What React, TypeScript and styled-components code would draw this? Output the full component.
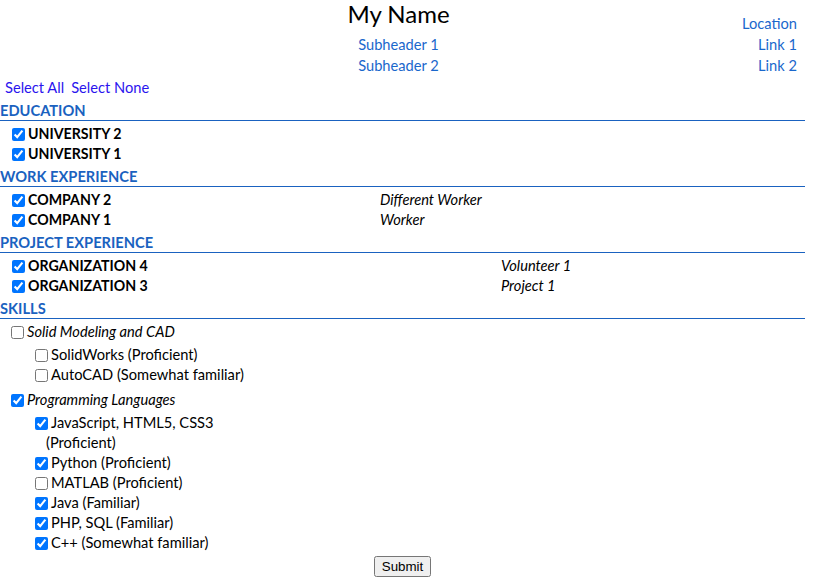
import React, { FC } from 'react';
import styled, { createGlobalStyle } from 'styled-components';

const GlobalStyle = createGlobalStyle`
  body {
    margin: 0;
    background: #fff;
    color: #000;
    font-family: Lato, "Open Sans", sans-serif;
    font-size: 14.67px;
  }
`;

const Page = styled.div`
  width: 805px;
`;

const Header = styled.div`
  display: grid;
  grid-template-columns: 1fr auto 1fr;
  grid-template-rows: 34px 21px 21px;
  padding-right: 8px;
`;

const Name = styled.div`
  grid-column: 2;
  grid-row: 1;
  justify-self: center;
  align-self: start;
  font-size: 24px;
  line-height: 27px;
`;

const SubLink = styled.a<{ $col: number; $row: number }>`
  grid-column: ${(p) => p.$col};
  grid-row: ${(p) => p.$row};
  justify-self: ${(p) => (p.$col === 3 ? 'end' : 'center')};
  align-self: ${(p) => (p.$row === 1 ? 'end' : 'center')};
  line-height: 21px;
  color: #1a67cc;
  text-decoration: none;
`;

const SelectBar = styled.div`
  display: flex;
  gap: 7px;
  margin-top: 1px;
  padding-left: 5px;
  line-height: 21px;
`;

const SelectLink = styled.a`
  color: #2a14ee;
  text-decoration: none;
  cursor: pointer;
`;

const SectionTitle = styled.div`
  padding-top: 4px;
  line-height: 18px;
  font-weight: bold;
  color: #1a62c0;
  border-bottom: 1px solid #1a62c0;
  margin-bottom: 3px;
`;

const Row = styled.div<{ $split: number }>`
  display: grid;
  grid-template-columns: ${(p) => p.$split}px 1fr;
  padding-left: 8px;
  line-height: 20px;
`;

const Check = styled.input.attrs({ type: 'checkbox' })`
  width: 13px;
  height: 13px;
  margin: 0 3px 0 4px;
  vertical-align: -2px;
`;

const Entry = styled.label`
  font-weight: bold;
  font-size: 14.2px;
`;

const Role = styled.span`
  font-style: italic;
`;

const SkillGroup = styled.div`
  padding-left: 7px;
  line-height: 20px;

  & + & {
    margin-top: 5px;
  }
`;

const GroupLabel = styled.label`
  font-style: italic;
`;

const SkillList = styled.div<{ $width: number }>`
  margin-top: 3px;
  width: ${(p) => p.$width}px;
`;

const SkillItem = styled.label`
  display: block;
  padding-left: 39px;
  text-indent: -15px;
  line-height: 20px;
`;

const Footer = styled.div`
  display: flex;
  justify-content: center;
  padding: 3px 0 8px;
`;

const SubmitButton = styled.button`
  font-family: "Liberation Sans", Arial, sans-serif;
  font-size: 13.33px;
`;

interface Item {
  name: string;
  role?: string;
}

const sections: { title: string; split: number; items: Item[] }[] = [
  { title: 'EDUCATION', split: 372, items: [{ name: 'UNIVERSITY 2' }, { name: 'UNIVERSITY 1' }] },
  {
    title: 'WORK EXPERIENCE',
    split: 372,
    items: [
      { name: 'COMPANY 2', role: 'Different Worker' },
      { name: 'COMPANY 1', role: 'Worker' },
    ],
  },
  {
    title: 'PROJECT EXPERIENCE',
    split: 493,
    items: [
      { name: 'ORGANIZATION 4', role: 'Volunteer 1' },
      { name: 'ORGANIZATION 3', role: 'Project 1' },
    ],
  },
];

const skills = [
  {
    group: 'Solid Modeling and CAD',
    checked: false,
    width: 280,
    items: [
      { name: 'SolidWorks (Proficient)', checked: false },
      { name: 'AutoCAD (Somewhat familiar)', checked: false },
    ],
  },
  {
    group: 'Programming Languages',
    checked: true,
    width: 222,
    items: [
      { name: 'JavaScript, HTML5, CSS3 (Proficient)', checked: true },
      { name: 'Python (Proficient)', checked: true },
      { name: 'MATLAB (Proficient)', checked: false },
      { name: 'Java (Familiar)', checked: true },
      { name: 'PHP, SQL (Familiar)', checked: true },
      { name: 'C++ (Somewhat familiar)', checked: true },
    ],
  },
];

const App: FC = () => (
  <Page>
    <GlobalStyle />
    <Header>
      <Name>My Name</Name>
      <SubLink $col={3} $row={1}>Location</SubLink>
      <SubLink $col={2} $row={2}>Subheader 1</SubLink>
      <SubLink $col={3} $row={2}>Link 1</SubLink>
      <SubLink $col={2} $row={3}>Subheader 2</SubLink>
      <SubLink $col={3} $row={3}>Link 2</SubLink>
    </Header>
    <SelectBar>
      <SelectLink>Select All</SelectLink>
      <SelectLink>Select None</SelectLink>
    </SelectBar>
    {sections.map((section) => (
      <div key={section.title}>
        <SectionTitle>{section.title}</SectionTitle>
        {section.items.map((item) => (
          <Row key={item.name} $split={section.split}>
            <Entry>
              <Check defaultChecked />
              {item.name}
            </Entry>
            {item.role && <Role>{item.role}</Role>}
          </Row>
        ))}
      </div>
    ))}
    <SectionTitle>SKILLS</SectionTitle>
    {skills.map((skill) => (
      <SkillGroup key={skill.group}>
        <GroupLabel>
          <Check defaultChecked={skill.checked} />
          {skill.group}
        </GroupLabel>
        <SkillList $width={skill.width}>
          {skill.items.map((item) => (
            <SkillItem key={item.name}>
              <Check defaultChecked={item.checked} />
              {item.name}
            </SkillItem>
          ))}
        </SkillList>
      </SkillGroup>
    ))}
    <Footer>
      <SubmitButton>Submit</SubmitButton>
    </Footer>
  </Page>
);

export default App;
